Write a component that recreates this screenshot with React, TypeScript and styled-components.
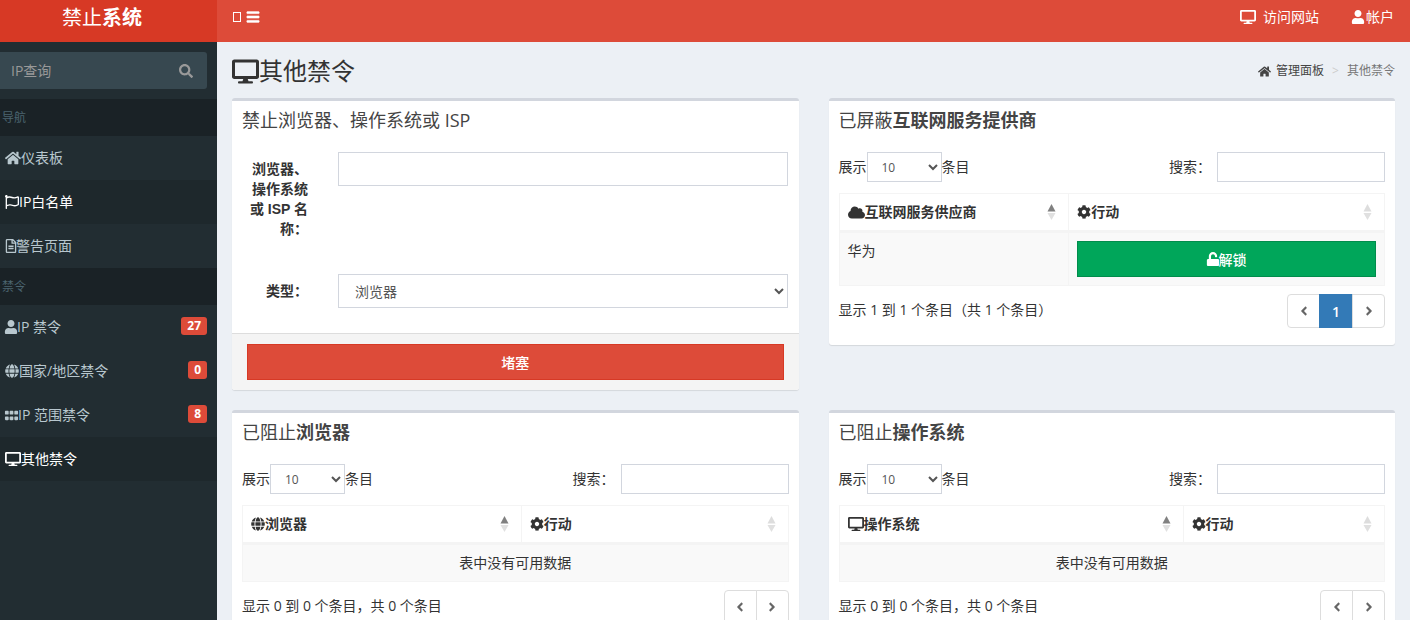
import React from 'react';
import styled, { createGlobalStyle } from 'styled-components';
import {
  FaAngleLeft,
  FaAngleRight,
  FaBars,
  FaCloud,
  FaCog,
  FaDesktop,
  FaGlobe,
  FaGripHorizontal,
  FaHome,
  FaRegFileAlt,
  FaRegFlag,
  FaSearch,
  FaUnlock,
  FaUser,
} from 'react-icons/fa';

const GlobalStyle = createGlobalStyle`
  * { box-sizing: border-box; }
  body {
    margin: 0;
    background: #ecf0f5;
    color: #333;
    font: 14px/20px "Open Sans", "Noto Sans CJK SC", sans-serif;
  }
  button, input, select { font-family: inherit; }
  a { color: inherit; text-decoration: none; }
  svg { flex: none; }
`;

const Page = styled.div`
  display: grid;
  grid-template-columns: 217px minmax(0, 1fr);
  grid-template-rows: 42px 1fr;
  min-height: 100vh;
`;

const Logo = styled.a`
  background: #d73925;
  color: #fff;
  font-size: 20px;
  line-height: 36px;
  text-align: center;
  padding-right: 13px;
`;

const Navbar = styled.header`
  display: flex;
  justify-content: space-between;
  align-items: flex-start;
  background: #dd4b39;
  color: #fff;
  padding: 7px 16px 0;
`;

const ToggleButton = styled.button`
  display: flex;
  align-items: center;
  gap: 5px;
  height: 20px;
  padding: 0;
  border: 0;
  background: none;
  color: inherit;
  font-size: 14px;
`;

const Caret = styled.span`
  width: 8px;
  height: 10px;
  border: 1px solid #fff;
`;

const BarsIcon = styled(FaBars)`
  stroke: currentColor;
  stroke-width: 24;
`;

const NavLinks = styled.nav`
  display: flex;
  gap: 32px;
`;

const NavLink = styled.a<{ $gap: number }>`
  display: flex;
  align-items: center;
  gap: ${(p) => p.$gap}px;
`;

const Sidebar = styled.aside`
  background: #222d32;
  color: #b8c7ce;
`;

const SearchForm = styled.form`
  display: flex;
  height: 37px;
  margin: 10px 10px 10px 0;
  background: #374850;
  border-radius: 0 3px 3px 0;
`;

const SearchInput = styled.input`
  flex: 1;
  min-width: 0;
  padding: 0 11px;
  border: 0;
  background: none;
  color: #fff;
  font-size: 14px;
  &::placeholder { color: #999; }
`;

const SearchButton = styled.button`
  display: flex;
  align-items: center;
  padding: 0 14px;
  border: 0;
  background: none;
  color: #999;
  font-size: 14px;
`;

const MenuHeader = styled.h2`
  margin: 0;
  padding: 0 2px;
  background: #1a2226;
  color: #4b646f;
  font-size: 12px;
  font-weight: 400;
  line-height: 37px;
`;

const Menu = styled.ul`
  margin: 0;
  padding: 0;
  list-style: none;
`;

const MenuLink = styled.a<{ $active?: boolean }>`
  display: flex;
  align-items: center;
  height: 44px;
  padding: 0 10px 0 5px;
  background: ${(p) => (p.$active ? '#1e282c' : 'transparent')};
  color: ${(p) => (p.$active ? '#fff' : '#b8c7ce')};
`;

const Badge = styled.span`
  margin: 0 0 2px auto;
  padding: 0 6px;
  border-radius: 3px;
  background: #dd4b39;
  color: #fff;
  font-size: 12px;
  font-weight: 700;
  line-height: 18px;
`;

const Main = styled.main`
  padding: 15px 15px 20px;
`;

const TitleRow = styled.div`
  display: flex;
  justify-content: space-between;
  align-items: center;
  height: 28px;
  margin-bottom: 13px;
`;

const Title = styled.h1`
  display: flex;
  align-items: center;
  margin: 0;
  font-size: 24px;
  font-weight: 400;
  line-height: 28px;
`;

const Breadcrumb = styled.nav`
  display: flex;
  align-items: center;
  gap: 8px;
  font-size: 12px;
  color: #777;
`;

const Crumb = styled.a`
  display: flex;
  align-items: center;
  gap: 5px;
  color: #444;
`;

const Separator = styled.span`
  color: #ccc;
`;

const Panels = styled.div`
  display: grid;
  grid-template-columns: repeat(2, minmax(0, 1fr));
  gap: 20px 30px;
  align-items: start;
`;

const Box = styled.section`
  border-top: 3px solid #d2d6de;
  border-radius: 3px;
  background: #fff;
  box-shadow: 0 1px 1px rgba(0, 0, 0, 0.1);
`;

const BoxTitle = styled.h3`
  margin: 0;
  padding: 9px 10px 11px;
  color: #444;
  font-size: 18px;
  font-weight: 400;
  line-height: 21px;
`;

const BoxBody = styled.div`
  padding: 10px 10px 17px;
`;

const BanForm = styled.form`
  display: flex;
  flex-direction: column;
`;

const Fields = styled.div`
  display: grid;
  grid-template-columns: 66px minmax(0, 1fr);
  gap: 35px 30px;
  align-items: start;
  padding: 10px 11px 25px 10px;
`;

const FieldLabel = styled.label`
  padding-top: 7px;
  font-family: "Liberation Sans", "Noto Sans CJK SC", sans-serif;
  font-weight: 700;
  text-align: right;
`;

const TextInput = styled.input`
  width: 100%;
  height: 34px;
  padding: 6px 12px;
  border: 1px solid #d2d6de;
  background: #fff;
  font-size: 14px;
`;

const Select = styled.select`
  width: 100%;
  height: 34px;
  padding: 6px 12px;
  border: 1px solid #d2d6de;
  border-radius: 0;
  background: #fff;
  color: #555;
  font-size: 14px;
`;

const BoxFooter = styled.div`
  padding: 10px 15px;
  border-top: 1px solid #ddd;
  border-radius: 0 0 3px 3px;
  background: #f4f4f4;
`;

const ActionButton = styled.button<{ $tone: 'danger' | 'success' }>`
  display: flex;
  align-items: center;
  justify-content: center;
  width: 100%;
  height: 36px;
  padding: 0;
  border: 1px solid ${(p) => (p.$tone === 'danger' ? '#d73925' : '#008d4c')};
  background: ${(p) => (p.$tone === 'danger' ? '#dd4b39' : '#00a65a')};
  color: #fff;
  font-size: 14px;
  font-weight: 500;
`;

const Controls = styled.div`
  display: flex;
  justify-content: space-between;
  margin-bottom: 11px;
`;

const ControlLabel = styled.label`
  display: flex;
  align-items: center;
`;

const LengthSelect = styled(Select)`
  width: 75px;
  height: 30px;
  padding: 5px 10px;
  font-size: 12px;
`;

const FilterInput = styled(TextInput)`
  width: 168px;
  height: 30px;
  margin-left: 6px;
  padding: 5px 10px;
  font-size: 12px;
`;

const Table = styled.table`
  width: 100%;
  border: 1px solid #f4f4f4;
  border-spacing: 0;
  table-layout: fixed;
`;

const HeadCell = styled.th<{ $width?: string }>`
  width: ${(p) => p.$width ?? 'auto'};
  padding: 8px;
  border-bottom: 3px solid #f4f4f4;
  text-align: left;
  & + & { border-left: 1px solid #f4f4f4; }
`;

const HeadContent = styled.div`
  display: flex;
  align-items: center;
  height: 20px;
`;

const SortIcon = styled.svg`
  margin: 0 4px 0 auto;
`;

const Cell = styled.td<{ $center?: boolean }>`
  padding: 8px;
  background: #f9f9f9;
  text-align: ${(p) => (p.$center ? 'center' : 'left')};
  vertical-align: top;
  & + & { border-left: 1px solid #f4f4f4; }
`;

const TableFooter = styled.div`
  display: flex;
  justify-content: space-between;
  align-items: flex-start;
  margin-top: 8px;
`;

const Info = styled.p`
  margin: 0;
  padding-top: 6px;
`;

const Pagination = styled.nav`
  display: flex;
`;

const PageButton = styled.button<{ $active?: boolean }>`
  display: flex;
  align-items: center;
  justify-content: center;
  width: ${(p) => (p.$active ? 34 : 33)}px;
  height: 34px;
  padding: 0;
  border: 1px solid ${(p) => (p.$active ? '#337ab7' : '#ddd')};
  background: ${(p) => (p.$active ? '#337ab7' : '#fff')};
  color: ${(p) => (p.$active ? '#fff' : '#666')};
  font-size: 14px;
  font-weight: 600;
  & + & { margin-left: -1px; }
  &:first-child { border-radius: 4px 0 0 4px; }
  &:last-child { border-radius: 0 4px 4px 0; }
`;

function Sort({ ascending }: { ascending?: boolean }) {
  return (
    <SortIcon width="9" height="16" viewBox="0 0 9 16" aria-hidden="true">
      <path d="M4.5 0L8.5 7.5H.5z" fill={ascending ? '#808080' : '#ddd'} />
      <path d="M.5 9H8.5L4.5 16z" fill="#e0e0e0" />
    </SortIcon>
  );
}

const NarrowIcon = styled.span<{ $width: number }>`
  display: flex;
  flex: none;
  justify-content: center;
  width: ${(p) => p.$width}px;
`;

type MenuItem = { icon: React.ReactNode; width: number; label: string; badge?: number; active?: boolean };

const navigation: MenuItem[] = [
  { icon: <FaHome size={16} />, width: 16, label: '仪表板' },
  { icon: <FaRegFlag size={14} />, width: 14, label: 'IP白名单', active: true },
  { icon: <FaRegFileAlt size={14} />, width: 11, label: '警告页面' },
];

const bans: MenuItem[] = [
  { icon: <FaUser size={14} />, width: 12, label: 'IP 禁令', badge: 27 },
  { icon: <FaGlobe size={14} />, width: 14, label: '国家/地区禁令', badge: 0 },
  { icon: <FaGripHorizontal size={15} />, width: 13, label: 'IP 范围禁令', badge: 8 },
  { icon: <FaDesktop size={16} />, width: 16, label: '其他禁令', active: true },
];

function MenuList({ items }: { items: MenuItem[] }) {
  return (
    <Menu>
      {items.map((item) => (
        <li key={item.label}>
          <MenuLink href="#" $active={item.active}>
            <NarrowIcon $width={item.width}>{item.icon}</NarrowIcon>
            <span>{item.label}</span>
            {item.badge !== undefined && <Badge>{item.badge}</Badge>}
          </MenuLink>
        </li>
      ))}
    </Menu>
  );
}

type BlockedBoxProps = {
  id: string;
  prefix: string;
  subject: string;
  icon: React.ReactNode;
  column: string;
  columnWidth: string;
  rows: string[];
  info: string;
};

function BlockedBox({ id, prefix, subject, icon, column, columnWidth, rows, info }: BlockedBoxProps) {
  return (
    <Box>
      <BoxTitle>
        {prefix}
        <b>{subject}</b>
      </BoxTitle>
      <BoxBody>
        <Controls>
          <ControlLabel htmlFor={`${id}-length`}>
            展示
            <LengthSelect id={`${id}-length`} defaultValue="10">
              <option>10</option>
              <option>25</option>
              <option>50</option>
            </LengthSelect>
            条目
          </ControlLabel>
          <ControlLabel htmlFor={`${id}-filter`}>
            搜索：
            <FilterInput id={`${id}-filter`} type="search" />
          </ControlLabel>
        </Controls>
        <Table>
          <thead>
            <tr>
              <HeadCell $width={columnWidth}>
                <HeadContent>
                  {icon}
                  {column}
                  <Sort ascending />
                </HeadContent>
              </HeadCell>
              <HeadCell>
                <HeadContent>
                  <FaCog size={14} />
                  行动
                  <Sort />
                </HeadContent>
              </HeadCell>
            </tr>
          </thead>
          <tbody>
            {rows.map((row) => (
              <tr key={row}>
                <Cell>{row}</Cell>
                <Cell>
                  <ActionButton type="button" $tone="success">
                    <NarrowIcon $width={12}>
                      <FaUnlock size={14} />
                    </NarrowIcon>
                    解锁
                  </ActionButton>
                </Cell>
              </tr>
            ))}
            {rows.length === 0 && (
              <tr>
                <Cell colSpan={2} $center>
                  表中没有可用数据
                </Cell>
              </tr>
            )}
          </tbody>
        </Table>
        <TableFooter>
          <Info>{info}</Info>
          <Pagination aria-label="分页">
            <PageButton type="button" aria-label="上一页">
              <FaAngleLeft />
            </PageButton>
            {rows.length > 0 && (
              <PageButton type="button" $active>
                1
              </PageButton>
            )}
            <PageButton type="button" aria-label="下一页">
              <FaAngleRight />
            </PageButton>
          </Pagination>
        </TableFooter>
      </BoxBody>
    </Box>
  );
}

export default function App() {
  return (
    <>
      <GlobalStyle />
      <Page>
        <Logo href="#">
          禁止<b>系统</b>
        </Logo>
        <Navbar>
          <ToggleButton type="button" aria-label="切换导航">
            <Caret />
            <BarsIcon size={14} />
          </ToggleButton>
          <NavLinks>
            <NavLink href="#" $gap={7}>
              <FaDesktop size={16} />
              访问网站
            </NavLink>
            <NavLink href="#" $gap={1}>
              <FaUser size={14} />
              帐户
            </NavLink>
          </NavLinks>
        </Navbar>
        <Sidebar>
          <SearchForm>
            <SearchInput placeholder="IP查询" aria-label="IP查询" />
            <SearchButton type="button" aria-label="搜索">
              <FaSearch />
            </SearchButton>
          </SearchForm>
          <MenuHeader>导航</MenuHeader>
          <MenuList items={navigation} />
          <MenuHeader>禁令</MenuHeader>
          <MenuList items={bans} />
        </Sidebar>
        <Main>
          <TitleRow>
            <Title>
              <FaDesktop size={27} />
              其他禁令
            </Title>
            <Breadcrumb aria-label="路径">
              <Crumb href="#">
                <FaHome size={13} />
                管理面板
              </Crumb>
              <Separator>&gt;</Separator>
              <span>其他禁令</span>
            </Breadcrumb>
          </TitleRow>
          <Panels>
            <Box>
              <BoxTitle>禁止浏览器、操作系统或 ISP</BoxTitle>
              <BanForm>
                <Fields>
                  <FieldLabel htmlFor="ban-name">浏览器、操作系统或 ISP 名称：</FieldLabel>
                  <TextInput id="ban-name" type="text" />
                  <FieldLabel htmlFor="ban-type">类型：</FieldLabel>
                  <Select id="ban-type">
                    <option>浏览器</option>
                    <option>操作系统</option>
                    <option>ISP</option>
                  </Select>
                </Fields>
                <BoxFooter>
                  <ActionButton type="button" $tone="danger">
                    堵塞
                  </ActionButton>
                </BoxFooter>
              </BanForm>
            </Box>
            <BlockedBox
              id="isp"
              prefix="已屏蔽"
              subject="互联网服务提供商"
              icon={<FaCloud size={17} />}
              column="互联网服务供应商"
              columnWidth="42%"
              rows={['华为']}
              info="显示 1 到 1 个条目（共 1 个条目）"
            />
            <BlockedBox
              id="browser"
              prefix="已阻止"
              subject="浏览器"
              icon={<FaGlobe size={14} />}
              column="浏览器"
              columnWidth="51%"
              rows={[]}
              info="显示 0 到 0 个条目，共 0 个条目"
            />
            <BlockedBox
              id="os"
              prefix="已阻止"
              subject="操作系统"
              icon={<FaDesktop size={16} />}
              column="操作系统"
              columnWidth="63%"
              rows={[]}
              info="显示 0 到 0 个条目，共 0 个条目"
            />
          </Panels>
        </Main>
      </Page>
    </>
  );
}
